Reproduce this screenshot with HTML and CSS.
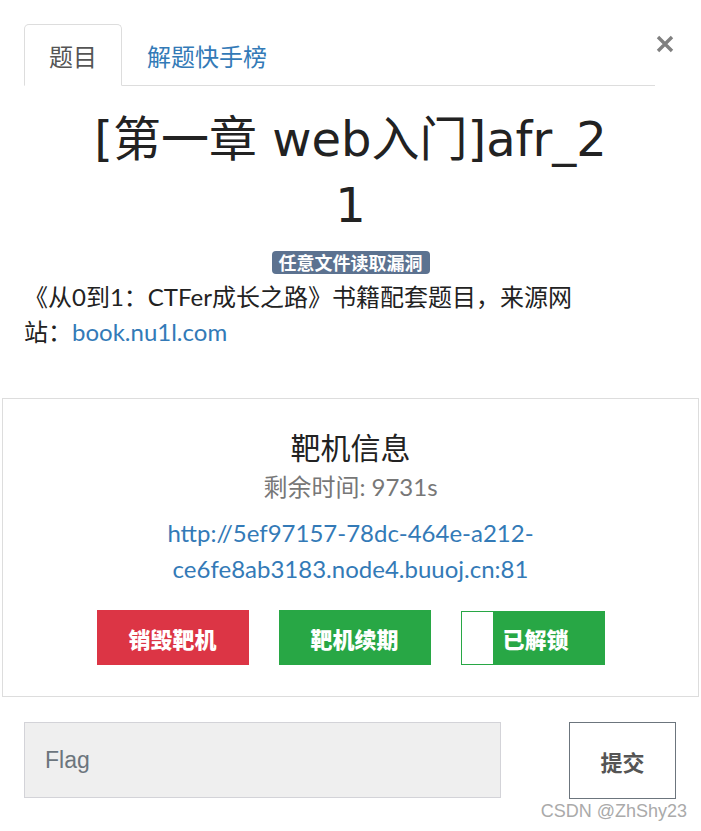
FILE: index.html
```html
<!DOCTYPE html>
<html lang="zh-CN">
<head>
    <meta charset="UTF-8">
    <meta name="viewport" content="width=device-width, initial-scale=1.0">
    <title>题目</title>
    <link rel="stylesheet" href="styles.css">
</head>
<body>
    <div class="modal">
        <div class="modal-header">
            <ul class="tabs">
                <li class="tab active">题目</li>
                <li class="tab"><a href="#">解题快手榜</a></li>
            </ul>
            <button class="close" aria-label="关闭">
                <svg width="18" height="18" viewBox="0 0 18 18">
                    <path d="M2 2 L16 16 M16 2 L2 16" stroke="#808080" stroke-width="3.4" stroke-linecap="butt"/>
                </svg>
            </button>
        </div>

        <h1 class="challenge-title">[第一章 web入门]afr_21</h1>
        <div class="tags">
            <span class="badge">任意文件读取漏洞</span>
        </div>
        <p class="description">《从0到1：CTFer成长之路》书籍配套题目，来源网站：<a href="#">book.nu1l.com</a></p>
    </div>

    <div class="target-box">
        <h3>靶机信息</h3>
        <div class="remaining">剩余时间: 9731s</div>
        <a class="target-url" href="#">http://5ef97157-78dc-464e-a212-<br>ce6fe8ab3183.node4.buuoj.cn:81</a>
        <div class="actions">
            <button class="btn btn-red">销毁靶机</button>
            <button class="btn btn-green">靶机续期</button>
            <button class="btn btn-green btn-unlock"><span class="unlock-slot"></span>已解锁</button>
        </div>
    </div>

    <form class="flag-form">
        <input type="text" class="flag-input" placeholder="Flag">
        <button type="button" class="submit-btn">提交</button>
    </form>

    <div class="watermark">CSDN @ZhShy23</div>
</body>
</html>
```

FILE: styles.css
```css
body {
    margin: 0;
    font-family: Lato, "Noto Sans CJK SC", sans-serif;
    color: #222;
    background: #fff;
}

.modal {
    padding: 24px 24px 0 24px;
}

.modal-header {
    display: flex;
    align-items: flex-start;
}

.tabs {
    flex: 1;
    display: flex;
    list-style: none;
    margin: 0;
    padding: 0;
    border-bottom: 1px solid #ddd;
}

.tab {
    height: 60px;
    padding: 0 24px;
    display: flex;
    align-items: center;
    font-size: 24px;
    color: #555;
    border: 1px solid transparent;
    border-radius: 5px 5px 0 0;
    margin-bottom: -1px;
}

.tab.active {
    border-color: #ddd;
    border-bottom-color: #fff;
    background: #fff;
}

.tab a {
    color: #337ab7;
    text-decoration: none;
}

.close {
    border: none;
    background: none;
    padding: 0;
    margin: 10px 2px 0 0;
    width: 20px;
    height: 20px;
    display: flex;
    align-items: center;
    justify-content: center;
    cursor: pointer;
}

.challenge-title {
    max-width: 528px;
    margin: 20px auto 0;
    font-family: "DejaVu Sans", "Noto Sans CJK SC", sans-serif;
    font-size: 48px;
    font-weight: 400;
    line-height: 66px;
    text-align: center;
    word-break: break-all;
    color: #222;
}

.tags {
    text-align: center;
    margin-top: 13px;
    line-height: 23px;
}

.badge {
    display: inline-block;
    background: #5c7290;
    color: #fff;
    font-family: "Noto Sans CJK SC", sans-serif;
    font-size: 18px;
    font-weight: 700;
    line-height: 23px;
    padding: 0 7px;
    border-radius: 4px;
}

.description {
    max-width: 580px;
    margin: 4px 0 0;
    font-size: 24px;
    line-height: 35px;
}

.description a {
    color: #337ab7;
    text-decoration: none;
}

.target-box {
    margin: 49px 2px 0;
    border: 1px solid #ddd;
    padding: 29px 0 31px;
    text-align: center;
}

.target-box h3 {
    margin: 0;
    font-size: 30px;
    font-weight: 400;
    line-height: 38px;
}

.remaining {
    margin-top: 3px;
    font-size: 24px;
    line-height: 35px;
    color: #777;
}

.target-url {
    display: block;
    margin-top: 11px;
    font-size: 24px;
    line-height: 36px;
    color: #337ab7;
    text-decoration: none;
}

.actions {
    display: flex;
    justify-content: center;
    gap: 30px;
    margin-top: 23px;
}

.btn {
    width: 152px;
    height: 55px;
    border: none;
    color: #fff;
    font-family: "Noto Sans CJK SC", sans-serif;
    font-size: 22px;
    font-weight: 900;
    cursor: pointer;
}

.btn-red {
    background: #dc3545;
}

.btn-green {
    background: #28a745;
}

.btn-unlock {
    width: 144px;
    height: 54px;
    margin-top: 1px;
    border: 1px solid #28a745;
    display: flex;
    align-items: center;
    padding: 0;
}

.unlock-slot {
    width: 31px;
    align-self: stretch;
    background: #fff;
    margin-right: 10px;
}

.flag-form {
    display: flex;
    justify-content: space-between;
    margin: 25px 25px 0 24px;
}

.flag-input {
    width: 477px;
    height: 76px;
    box-sizing: border-box;
    border: 1px solid #d3d3d8;
    background: #efefef;
    padding: 0 20px;
    font-family: "Liberation Sans", Arial, sans-serif;
    font-size: 23px;
    color: #333;
}

.flag-input::placeholder {
    color: #6c757d;
}

.submit-btn {
    width: 107px;
    height: 77px;
    border: 1px solid #6c757d;
    background: #fff;
    color: #555;
    font-family: "Noto Sans CJK SC", sans-serif;
    font-size: 22px;
    font-weight: 700;
}

.watermark {
    text-align: right;
    padding-right: 14px;
    margin-top: 2px;
    font-family: "Liberation Sans", Arial, sans-serif;
    font-size: 18px;
    color: #aaa;
}
```
